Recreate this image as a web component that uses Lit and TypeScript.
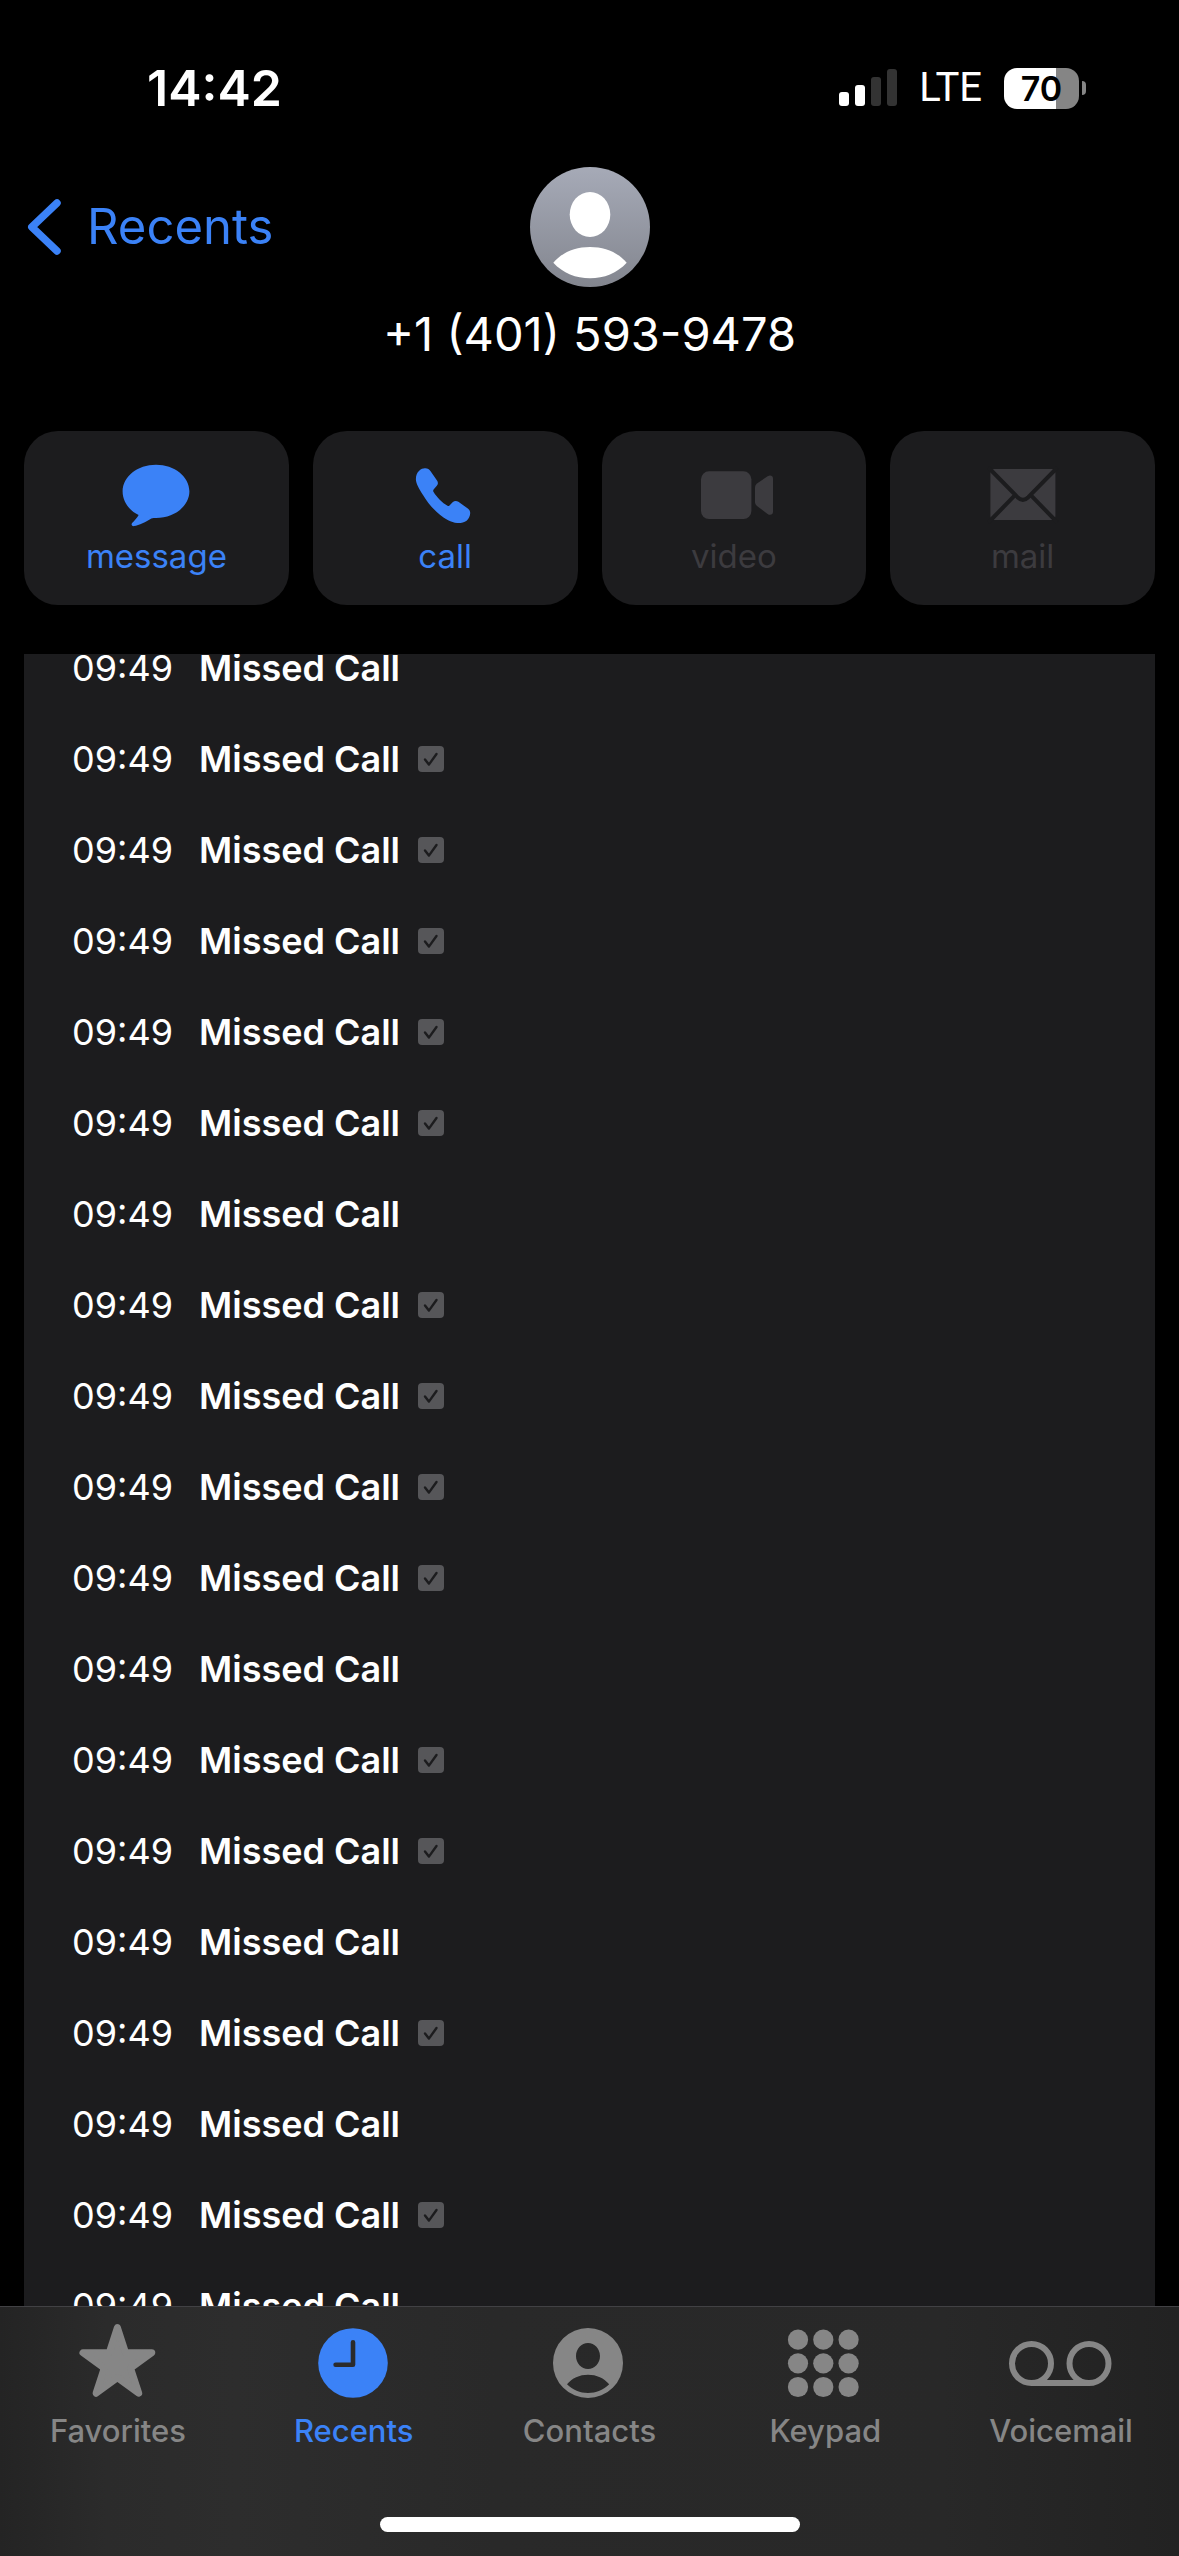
import { LitElement, html, svg, css } from "lit";
import { customElement, property } from "lit/decorators.js";
import { classMap } from "lit/directives/class-map.js";

const messageIcon = svg`<path fill="currentColor" d="M40 1.7C58.5 1.7 73.4 13.6 73.4 28.3S58.5 55 40 55c-1.8 0-3.1 0-4.7.4C30 58.7 23 62.2 18 63.1c-2.3.3-3-1.4-1.9-3C18.3 57.6 21.500 54.5 22.6 52 13 47.5 6.6 38.5 6.6 28.3 6.6 13.6 21.5 1.7 40 1.7z"/>`;

const callIcon = svg`<path fill="currentColor" d="M14.2 7.7C16.2 5.9 18.2 5.2 20.2 5.3 22.8 5.4 24.3 6.3 25.6 8.2L32 17.6C33.3 19.7 33.2 21 31.8 22.8L28.8 26.2C28 27.2 28 28 28.6 29 31.5 34 37.5 40 42.5 42.8 43.3 43.2 43.8 43.1 44.5 42.5L47.6 39.3C49.3 37.7 51.4 37.5 53.4 38.8L62.8 45.4C64.6 46.7 65.3 48.2 65.2 50.3 65 53.5 63.6 56 61.6 57.7 59 59.7 55.5 60.2 52.2 60 46 59.5 40 56 34.9 51.8 28 46 22 39 18 32 14 25.5 11.2 21 10.9 16.5 10.8 12.5 12 9.6 14.2 7.7z"/>`;

const videoIcon = svg`
  <rect x="7" y="8.3" width="50.4" height="47.7" rx="8" fill="currentColor"/>
  <path fill="currentColor" d="M61 25c0-2 .5-3.2 2-4.5L73.6 13.2C76.3 11.5 79 12.7 79 15.5V48.8C79 51.6 76.3 52.8 73.6 51L63 43C61.5 41.7 61 40.6 61 38.8z"/>`;

const mailIcon = svg`
  <rect x="7.4" y="6" width="65" height="51" rx="4" fill="currentColor"/>
  <path class="seam" d="M5.4 4.5L34.5 34.2Q39.9 39.4 45.3 34.2L74.4 4.5M5.4 59.5L31.8 32.4M74.4 59.5L48 32.4"/>`;

const starIcon = svg`<polygon fill="currentColor" stroke="currentColor" stroke-width="7" stroke-linejoin="round"
  points="59.4,4.7 67.5,29.7 93.8,29.7 72.5,45.2 80.7,70.2 59.4,54.7 38.1,70.2 46.3,45.2 25,29.7 51.3,29.7"/>`;

const clockIcon = svg`
  <circle cx="59" cy="40" r="34.8" fill="currentColor"/>
  <path class="hands" d="M59 19.3V41.7H41.6"/>`;

const personIcon = svg`<path fill="currentColor" fill-rule="evenodd" d="M59 5a35 35 0 1 0 0 70a35 35 0 1 0 0-70z
  M59 20c6.6 0 12 5.8 12 13s-5.4 13-12 13-12-5.8-12-13 5.4-13 12-13z
  M38 61.3C43 55 50.5 51.7 59 51.7S75.2 55 80.2 61.3C74.5 67 67 70 59 70S43.8 67 38 61.3z"/>`;

const keypadIcon = svg`${[16.7, 40.3, 64].map((cy) =>
  [33, 58.3, 83.6].map((cx) => svg`<circle cx=${cx} cy=${cy} r="10.1" fill="currentColor"/>`))}`;

const voicemailIcon = svg`<g fill="none" stroke="currentColor" stroke-width="6">
  <circle cx="30.5" cy="40.5" r="19.5"/><circle cx="88" cy="40.5" r="19.5"/><path d="M30.5 60H88"/></g>`;

@customElement("status-bar")
class StatusBar extends LitElement {
  static styles = css`
    :host { display: flex; align-items: center; justify-content: space-between; padding: 58px 93px 0 147px; }
    .time { font-size: 50px; font-weight: 600; line-height: 60px; }
    .right { display: flex; align-items: center; gap: 22px; }
    .network { font: 40px/60px Roboto, Inter, sans-serif; }
    .signal { width: 58px; height: 38px; display: block; }
    .battery { display: flex; align-items: center; gap: 3px; }
    .level {
      width: 75px; height: 41px; border-radius: 13px; color: #000; text-align: center;
      font-size: 34px; font-weight: 600; line-height: 41px;
      background: linear-gradient(90deg, #fff 70%, #858585 70%);
    }
    .nub { width: 4px; height: 14px; border-radius: 0 4px 4px 0; background: #858585; }
  `;
  render() {
    return html`
      <span class="time">14:42</span>
      <div class="right">
        <svg class="signal" viewBox="0 0 58 38" role="img" aria-label="Signal: 2 of 4 bars">
          <rect x="0" y="23" width="10" height="14" rx="3" fill="#fff"/>
          <rect x="16" y="16" width="10" height="21" rx="3" fill="#fff"/>
          <rect x="32" y="8" width="10" height="29" rx="3" fill="#333"/>
          <rect x="48" y="0" width="10" height="37" rx="3" fill="#333"/>
        </svg>
        <span class="network">LTE</span>
        <div class="battery"><span class="level">70</span><span class="nub"></span></div>
      </div>`;
  }
}

@customElement("contact-header")
class ContactHeader extends LitElement {
  static styles = css`
    :host { display: block; padding: 49px 24px 0; }
    .nav { display: grid; grid-template-columns: 1fr auto 1fr; align-items: center; }
    .back {
      justify-self: start; display: flex; align-items: center; gap: 23px; padding: 0; border: 0;
      background: none; color: #3b82f7; font: inherit; font-size: 49px; line-height: 60px;
    }
    .chevron { width: 40px; height: 60px; display: block; }
    .avatar { width: 120px; height: 120px; display: block; }
    .number { margin: 17px 0 0; text-align: center; font-size: 47px; font-weight: 400; line-height: 60px; }
  `;
  render() {
    return html`
      <div class="nav">
        <button class="back">
          <svg class="chevron" viewBox="0 0 40 60" aria-hidden="true">
            <path d="M33 6L7.800 30L33 54" fill="none" stroke="currentColor" stroke-width="7.5" stroke-linecap="round" stroke-linejoin="round"/>
          </svg>Recents
        </button>
        <svg class="avatar" viewBox="0 0 120 120" aria-hidden="true">
          <defs><linearGradient id="g" x1="0" y1="0" x2="0" y2="1">
            <stop offset="0" stop-color="#a6aab7"/><stop offset="1" stop-color="#83868f"/>
          </linearGradient></defs>
          <circle cx="60" cy="60" r="60" fill="url(#g)"/>
          <ellipse cx="60" cy="47.5" rx="20.3" ry="22.5" fill="#fff"/>
          <path fill="#fff" d="M23.3 95.7C32 85.5 45 80 60 80S88 85.5 96.7 95.7C87 106 74 111.3 60 111.3S33 106 23.3 95.7z"/>
        </svg>
      </div>
      <h1 class="number">+1 (401) 593-9478</h1>`;
  }
}

@customElement("contact-actions")
class ContactActions extends LitElement {
  static styles = css`
    :host { display: grid; grid-template-columns: repeat(4, 1fr); gap: 24px; padding: 67px 24px 49px; }
    .card {
      display: flex; flex-direction: column; align-items: center; gap: 8px; padding: 32px 0 28px;
      border: 0; border-radius: 34px; background: #1c1c1e; color: #3b82f7;
      font: inherit; font-size: 33px; line-height: 42px;
    }
    .card:disabled { color: #3c3b3f; }
    .icon { width: 80px; height: 64px; display: block; }
    .seam { fill: none; stroke: #1c1c1e; stroke-width: 4; }
  `;
  render() {
    const actions = [
      { label: "message", icon: messageIcon, enabled: true },
      { label: "call", icon: callIcon, enabled: true },
      { label: "video", icon: videoIcon, enabled: false },
      { label: "mail", icon: mailIcon, enabled: false },
    ];
    return actions.map((a) => html`
      <button class="card" ?disabled=${!a.enabled}>
        <svg class="icon" viewBox="0 0 80 64" aria-hidden="true">${a.icon}</svg>
        <span>${a.label}</span>
      </button>`);
  }
}

@customElement("call-log")
class CallLog extends LitElement {
  @property({ attribute: false }) calls: boolean[] = [];

  static styles = css`
    :host { display: block; margin: 0 24px; background: #1c1c1e; overflow-y: auto; scrollbar-width: none; }
    .list { list-style: none; margin: 0; padding: 0; font-size: 36px; }
    .row { display: flex; align-items: center; padding-left: 48px; height: 91px; }
    .kind { margin-left: 26px; font-weight: 600; }
    .verified { width: 26px; height: 26px; margin-left: 18px; }
  `;

  // The log opens slightly scrolled, so the first call is cut by the top edge.
  async firstUpdated() {
    await this.updateComplete;
    this.scrollTop = 32;
  }

  render() {
    return html`<ol class="list">${this.calls.map((verified) => html`
      <li class="row">
        <time>09:49</time>
        <span class="kind">Missed Call</span>
        ${verified ? html`<svg class="verified" viewBox="0 0 26 26" role="img" aria-label="Verified">
          <rect width="26" height="26" rx="4" fill="#565659"/>
          <path d="M7 13.5L10.9 18.6L18.5 8" fill="none" stroke="#1c1c1e" stroke-width="2.4" stroke-linecap="round" stroke-linejoin="round"/>
        </svg>` : null}
      </li>`)}</ol>`;
  }
}

@customElement("tab-bar")
class TabBar extends LitElement {
  static styles = css`
    :host {
      display: flex; flex-direction: column; align-items: center; gap: 66px; padding: 16px 0 24px;
      border-top: 1px solid #414144;
      background: linear-gradient(90deg, #242424 0%, #2b2b2b 9%, #2d2d2d 20%, #292929 42%, #282828 80%, #222 100%);
    }
    .tabs { align-self: stretch; display: grid; grid-template-columns: repeat(5, 1fr); }
    .tab {
      display: flex; flex-direction: column; align-items: center; gap: 8px;
      color: #868686; text-decoration: none; font-size: 31px; font-weight: 500; line-height: 40px;
    }
    .active { color: #3b82f7; }
    .icon { width: 120px; height: 80px; display: block; }
    .hands { fill: none; stroke: #2b2b2b; stroke-width: 4.6; stroke-linecap: round; stroke-linejoin: round; }
    .home { width: 36%; max-width: 420px; height: 15px; border-radius: 8px; background: #fff; }
  `;
  render() {
    const tabs = [
      { label: "Favorites", icon: starIcon },
      { label: "Recents", icon: clockIcon, active: true },
      { label: "Contacts", icon: personIcon },
      { label: "Keypad", icon: keypadIcon },
      { label: "Voicemail", icon: voicemailIcon },
    ];
    return html`
      <nav class="tabs">${tabs.map((t) => html`
        <a class=${classMap({ tab: true, active: !!t.active })} href="#${t.label.toLowerCase()}">
          <svg class="icon" viewBox="0 0 120 80" aria-hidden="true">${t.icon}</svg>
          <span>${t.label}</span>
        </a>`)}</nav>
      <div class="home"></div>`;
  }
}

const verifiedCalls = [
  false, true, true, true, true, true, false, true, true, true,
  true, false, true, true, false, true, false, true, false,
];

@customElement("app-root")
class AppRoot extends LitElement {
  static styles = css`
    :host {
      display: flex; flex-direction: column; height: 100vh; background: #000; color: #fff;
      font-family: Inter, "Liberation Sans", sans-serif;
    }
    .log { flex: 1; min-height: 0; }
  `;
  render() {
    return html`
      <status-bar></status-bar>
      <contact-header></contact-header>
      <contact-actions></contact-actions>
      <call-log class="log" .calls=${verifiedCalls}></call-log>
      <tab-bar></tab-bar>`;
  }
}
